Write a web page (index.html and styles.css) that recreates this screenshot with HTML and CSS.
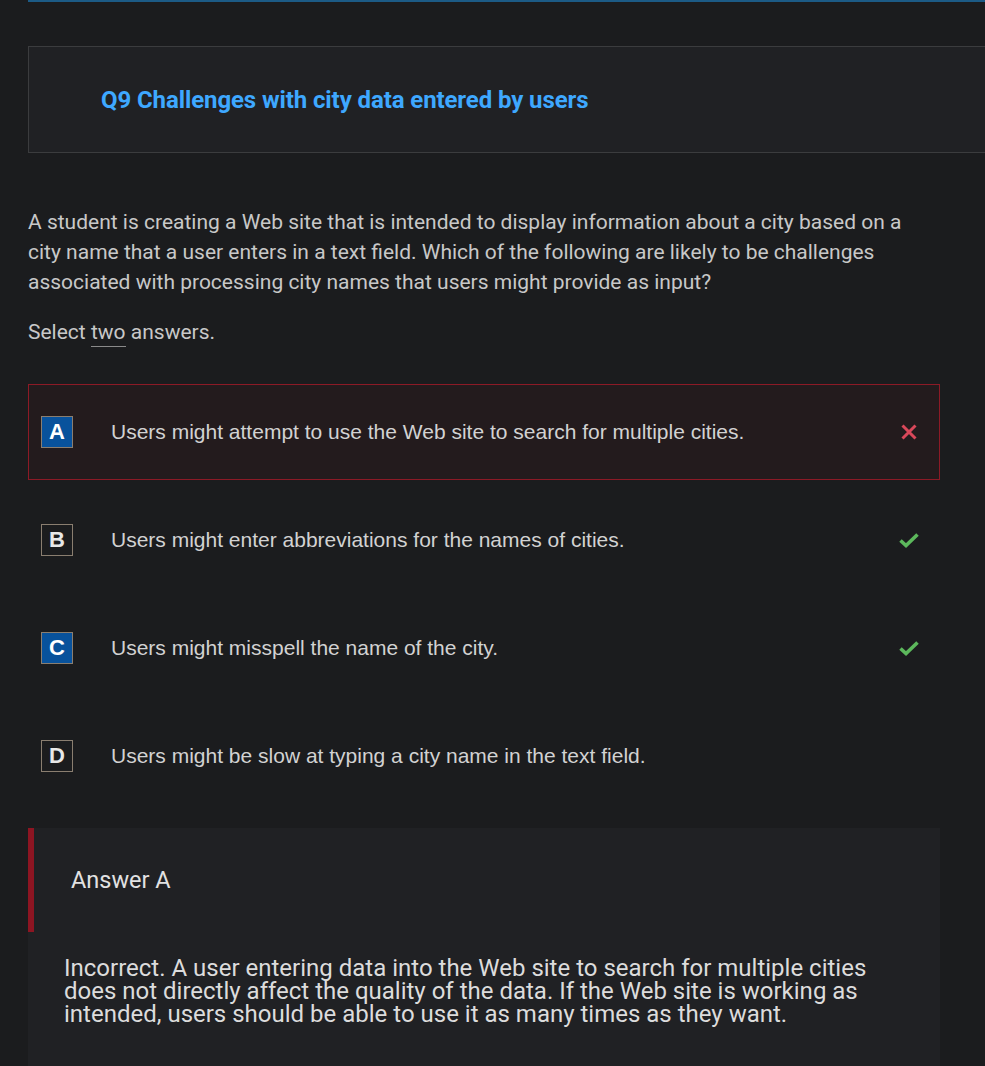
FILE: index.html
```html
<!DOCTYPE html>
<html lang="en">
<head>
<meta charset="utf-8">
<title>Q9 Challenges with city data entered by users</title>
<link rel="stylesheet" href="styles.css">
</head>
<body>
<div class="page">
  <div class="topline"></div>
  <div class="qheader">
    <h2 class="qtitle">Q9 Challenges with city data entered by users</h2>
  </div>
  <p class="stem">A student is creating a Web site that is intended to display information about a city based on a city name that a user enters in a text field. Which of the following are likely to be challenges associated with processing city names that users might provide as input?</p>
  <p class="instr">Select <abbr class="two" title="2">two</abbr> answers.</p>

  <div class="options">
    <div class="option wrong">
      <span class="letter selected">A</span>
      <span class="otext">Users might attempt to use the Web site to search for multiple cities.</span>
      <svg class="mark" width="20" height="20" viewBox="0 0 20 20"><path d="M3.5 3.5 L16.5 16.5 M16.5 3.5 L3.5 16.5" stroke="#d9485a" stroke-width="3" stroke-linecap="butt" fill="none"/></svg>
    </div>
    <div class="option">
      <span class="letter">B</span>
      <span class="otext">Users might enter abbreviations for the names of cities.</span>
      <svg class="mark" width="20" height="20" viewBox="0 0 20 20"><path d="M1.5 10.5 L7 15.5 L18.5 4.5" stroke="#5cb85c" stroke-width="3.6" stroke-linejoin="miter" fill="none"/></svg>
    </div>
    <div class="option">
      <span class="letter selected">C</span>
      <span class="otext">Users might misspell the name of the city.</span>
      <svg class="mark" width="20" height="20" viewBox="0 0 20 20"><path d="M1.5 10.5 L7 15.5 L18.5 4.5" stroke="#5cb85c" stroke-width="3.6" stroke-linejoin="miter" fill="none"/></svg>
    </div>
    <div class="option">
      <span class="letter">D</span>
      <span class="otext">Users might be slow at typing a city name in the text field.</span>
    </div>
  </div>

  <div class="answer">
    <div class="ahead">Answer A</div>
    <p class="abody">Incorrect. A user entering data into the Web site to search for multiple cities does not directly affect the quality of the data. If the Web site is working as intended, users should be able to use it as many times as they want.</p>
  </div>
</div>
</body>
</html>
```

FILE: styles.css
```css
html, body {
  margin: 0;
  padding: 0;
  background: #1b1c1e;
  overflow: hidden;
}
body {
  font-family: Roboto, "Liberation Sans", sans-serif;
  color: #c9c9c9;
}
.page {
  padding-left: 28px;
}
.topline {
  height: 2px;
  background: #1c5b86;
  margin-right: -10px;
}
.qheader {
  margin-top: 44px;
  height: 105px;
  border: 1px solid #3b3c3e;
  background: #202124;
  margin-right: -40px;
  display: flex;
  align-items: center;
}
.qtitle {
  margin: 0;
  padding-left: 72px;
  font-family: Roboto, sans-serif;
  font-weight: 700;
  font-size: 24px;
  color: #3ea8ff;
  letter-spacing: -0.1px;
}
.stem {
  margin: 54px 0 0 0;
  width: 900px;
  font-size: 21px;
  line-height: 30px;
  color: #c8c8c8;
}
.instr {
  margin: 20px 0 0 0;
  font-size: 21px;
  line-height: 30px;
  color: #c8c8c8;
}
.two {
  text-decoration: none;
  border-bottom: 1px solid #8a8a8a;
  padding-bottom: 2px;
}
.options {
  margin-top: 37px;
  width: 912px;
  display: flex;
  flex-direction: column;
  gap: 12px;
}
.option {
  box-sizing: border-box;
  height: 96px;
  border: 1px solid transparent;
  display: flex;
  align-items: center;
  padding: 0 20px 0 12px;
}
.option.wrong {
  border-color: #8c1a26;
  background: #231b1d;
}
.letter {
  box-sizing: border-box;
  width: 32px;
  height: 32px;
  border: 1px solid #8a7e70;
  display: flex;
  align-items: center;
  justify-content: center;
  font-family: "Liberation Sans", Arial, sans-serif;
  font-weight: 700;
  font-size: 22px;
  color: #e8e8e8;
  flex: none;
}
.letter.selected {
  background: #08529c;
  color: #ffffff;
}
.otext {
  margin-left: 38px;
  flex: 1;
  font-family: "Liberation Sans", Arial, sans-serif;
  font-size: 21px;
  color: #d2d2d2;
}
.mark {
  flex: none;
}
.answer {
  margin-top: 24px;
  width: 912px;
  background: #202124;
  padding-bottom: 40px;
}
.ahead {
  box-sizing: border-box;
  height: 104px;
  border-left: 6px solid #8d1522;
  padding-left: 37px;
  display: flex;
  align-items: center;
  font-size: 23.5px;
  color: #e2e2e2;
}
.abody {
  margin: 0;
  padding: 25px 46px 0 36px;
  font-size: 24px;
  line-height: 23px;
  color: #dcdcdc;
}
```
